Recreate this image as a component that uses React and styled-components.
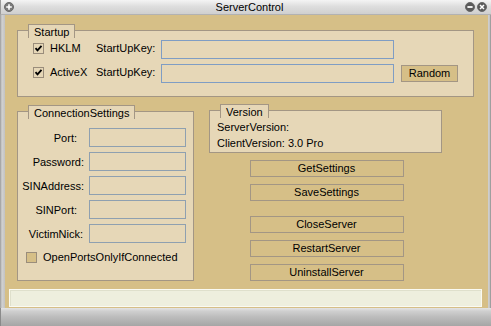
import React from "react";
import styled, { createGlobalStyle } from "styled-components";

const GlobalStyle = createGlobalStyle`
  html, body { margin:0; padding:0; background:#808080; }
  body { font-family: "Liberation Sans", Arial, sans-serif; font-size:11px; color:#000; }
  * { box-sizing:border-box; }
`;

const BEIGE = "#d6bf87";
const FILL = "#e6d7b7";
const EDGE = "#a39684";

// small round title-bar glyphs
function RoundIcon({ kind }) {
  return (
    <svg width="10" height="10" viewBox="0 0 10 10">
      <circle cx="5" cy="5" r="4.5" fill={kind === "menu" ? "#7a7a7a" : "#5a5a5a"} stroke="#6a6a6a" />
      {kind === "menu" && <path d="M5 2.2v5.6M2.2 5h5.6" stroke="#fff" strokeWidth="1.6" />}
      {kind === "min" && <path d="M2.4 5h5.2" stroke="#fff" strokeWidth="1.8" />}
      {kind === "close" && <path d="M3 3l4 4M7 3l-4 4" stroke="#fff" strokeWidth="1.5" />}
    </svg>
  );
}

function Check({ checked }) {
  return (
    <CheckBox $checked={checked}>
      {checked && (
        <svg width="9" height="9" viewBox="0 0 9 9">
          <path d="M1.5 4.2l2 2.2 4-4.6" fill="none" stroke="#000" strokeWidth="1.8" />
        </svg>
      )}
    </CheckBox>
  );
}

const fields = [
  { label: "Port:", inset: 7 },
  { label: "Password:", inset: 0 },
  { label: "SINAddress:", inset: 0 },
  { label: "SINPort:", inset: 7 },
  { label: "VictimNick:", inset: 1 },
];

export default function App() {
  return (
    <>
      <GlobalStyle />
      <Window>
        <TitleBar>
          <RoundIcon kind="menu" />
          <Title>ServerControl</Title>
          <TitleButtons>
            <RoundIcon kind="min" />
            <RoundIcon kind="close" />
          </TitleButtons>
        </TitleBar>
        <Frame>
          <Content>
            <Main>
              <Group $w={457} $h={67}>
                <Tab>Startup</Tab>
                <StartupBody>
                  <StartupRow>
                    <CheckField>
                      <Check checked />
                      <CheckText>HKLM</CheckText>
                    </CheckField>
                    <KeyLabel>StartUpKey:</KeyLabel>
                    <TextInput $w={233} $color="#7f9dc4" readOnly />
                  </StartupRow>
                  <StartupRow>
                    <CheckField>
                      <Check checked />
                      <CheckText>ActiveX</CheckText>
                    </CheckField>
                    <KeyLabel>StartUpKey:</KeyLabel>
                    <TextInput $w={233} $color="#7f9dc4" readOnly />
                    <Button $w={57}>Random</Button>
                  </StartupRow>
                </StartupBody>
              </Group>

              <Lower>
                <Group $w={177} $h={170} $offset={1}>
                  <Tab>ConnectionSettings</Tab>
                  <FieldGrid>
                    {fields.map((f) => (
                      <React.Fragment key={f.label}>
                        <FieldLabel $inset={f.inset}>{f.label}</FieldLabel>
                        <TextInput $w={97} $color="#8fa0b0" readOnly />
                      </React.Fragment>
                    ))}
                  </FieldGrid>
                  <OptionRow>
                    <Check />
                    <CheckText>OpenPortsOnlyIfConnected</CheckText>
                  </OptionRow>
                </Group>

                <RightColumn>
                  <Group $w={233} $h={43}>
                    <Tab>Version</Tab>
                    <VersionBody>
                      <div>ServerVersion:</div>
                      <div>ClientVersion: 3.0 Pro</div>
                    </VersionBody>
                  </Group>
                  <ButtonStack>
                    <Button $w={154}>GetSettings</Button>
                    <Button $w={154}>SaveSettings</Button>
                    <Button $w={154} $space={8}>CloseServer</Button>
                    <Button $w={154}>RestartServer</Button>
                    <Button $w={154}>UninstallServer</Button>
                  </ButtonStack>
                </RightColumn>
              </Lower>
            </Main>
            <StatusBar />
          </Content>
        </Frame>
        <BottomFrame />
      </Window>
    </>
  );
}

const Window = styled.div`
  width:491px;
  height:326px;
  display:flex;
  flex-direction:column;
  background:#c4c4c4;
  overflow:hidden;
`;
const TitleBar = styled.div`
  height:15px;
  display:flex;
  align-items:center;
  padding:0 4px 0 3px;
  background:linear-gradient(#f4f4f4 0%, #dedede 45%, #cfcfcf 100%);
  border-bottom:1px solid #b2b2b2;
  border-left:1px solid #9a9a9a;
`;
const Title = styled.div`
  flex:1;
  text-align:center;
  font-size:11px;
  line-height:13px;
  padding-left:20px;
`;
const TitleButtons = styled.div`
  display:flex;
  gap:2px;
`;
const Frame = styled.div`
  flex:1;
  display:flex;
  padding:0 3px 0 5px;
  background:linear-gradient(90deg, #9a9a9a 0, #d2d2d2 2px, #c2c2c2 5px, #c2c2c2 calc(100% - 3px), #d8d8d8 calc(100% - 2px), #8c8c8c 100%);
`;
const Content = styled.div`
  flex:1;
  display:flex;
  flex-direction:column;
  padding-top:15px;
  background:${BEIGE};
`;
const Main = styled.div`
  padding:0 12px;
`;
const Group = styled.div`
  position:relative;
  width:${(p) => p.$w}px;
  height:${(p) => p.$h}px;
  margin-top:${(p) => p.$offset || 0}px;
  border:1px solid ${EDGE};
  background:${FILL};
`;
const Tab = styled.div`
  position:absolute;
  top:-7px;
  left:10px;
  height:14px;
  padding:0 5px;
  line-height:14px;
  background:${FILL};
  border:1px solid ${EDGE};
  border-bottom:none;
  white-space:nowrap;
`;
const StartupBody = styled.div`
  display:flex;
  flex-direction:column;
  gap:5px;
  padding:9px 0 0 15px;
`;
const StartupRow = styled.div`
  display:flex;
  align-items:center;
  height:19px;
`;
const CheckField = styled.div`
  width:63px;
  display:flex;
  align-items:center;
  margin-top:-3px;
`;
const CheckBox = styled.span`
  width:11px;
  height:11px;
  display:flex;
  align-items:center;
  justify-content:center;
  border:1px solid #9a8d7b;
  background:${(p) => (p.$checked ? FILL : BEIGE)};
  flex-shrink:0;
`;
const CheckText = styled.span`
  margin-left:6px;
  white-space:nowrap;
`;
const KeyLabel = styled.span`
  width:65px;
  margin-top:-3px;
`;
const TextInput = styled.input`
  width:${(p) => p.$w}px;
  height:19px;
  margin:0;
  padding:0 2px;
  border:1px solid ${(p) => p.$color};
  background:transparent;
  outline:none;
  font:inherit;
`;
const Button = styled.button`
  width:${(p) => p.$w}px;
  height:17px;
  margin:0;
  margin-left:${(p) => (p.$w < 100 ? 7 : 0)}px;
  margin-top:${(p) => p.$space || 0}px;
  padding:0;
  border:1px solid ${EDGE};
  background:${BEIGE};
  font-family:"Liberation Sans", Arial, sans-serif;
  font-size:11px;
  line-height:15px;
  color:#000;
`;
const Lower = styled.div`
  display:flex;
  align-items:flex-start;
  gap:15px;
  margin-top:13px;
`;
const FieldGrid = styled.div`
  display:grid;
  grid-template-columns:66px 97px;
  column-gap:5px;
  row-gap:5px;
  align-items:center;
  padding-top:16px;
`;
const FieldLabel = styled.span`
  text-align:right;
  padding-right:${(p) => p.$inset}px;
  white-space:nowrap;
`;
const OptionRow = styled.div`
  display:flex;
  align-items:center;
  margin-top:8px;
  padding-left:8px;
`;
const RightColumn = styled.div`
  width:233px;
  display:flex;
  flex-direction:column;
  align-items:center;
`;
const VersionBody = styled.div`
  padding:8px 0 0 7px;
  line-height:16px;
  align-self:stretch;
`;
const ButtonStack = styled.div`
  display:flex;
  flex-direction:column;
  gap:7px;
  margin-top:7px;
  margin-left:2px;
`;
const StatusBar = styled.div`
  height:18px;
  margin:auto 6px 1px 4px;
  background:#eeefde;
  border:1px solid #fafaf2;
  box-shadow:inset 1px 1px 0 #dfe0cc;
`;
const BottomFrame = styled.div`
  height:18px;
  background:linear-gradient(#e4e4e4 0, #d0d0d0 3px, #bcbcbc 9px, #a6a6a6 100%);
  border-left:1px solid #8a8a8a;
`;
